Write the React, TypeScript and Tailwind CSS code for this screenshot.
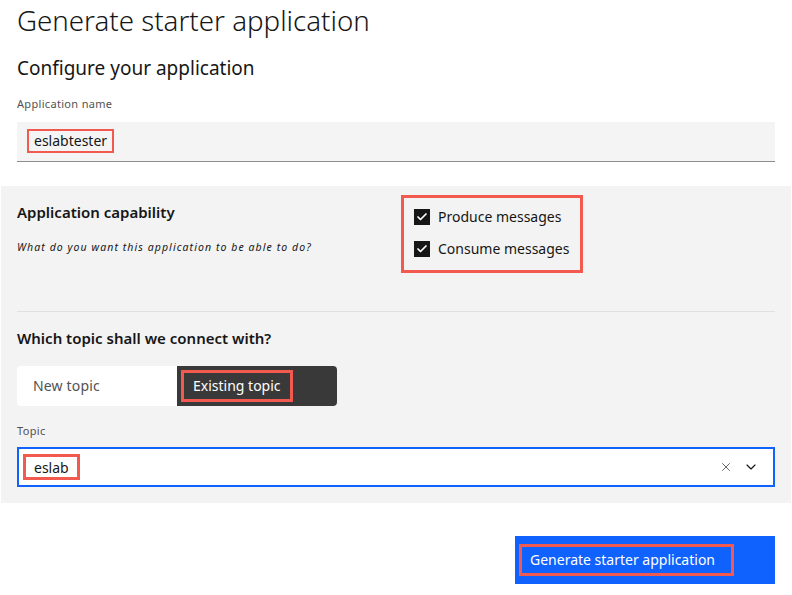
import { Check, X, ChevronDown } from "lucide-react";

const font = { fontFamily: '"Noto Sans", "Open Sans", Arial, sans-serif' };

function Checkbox({ label }: { label: string }) {
  return (
    <label className="flex h-[20px] items-center gap-2 text-[14px] text-[#161616]">
      <span className="flex h-4 w-4 items-center justify-center bg-[#161616]">
        <Check className="h-3 w-3 text-white" strokeWidth={3.5} />
      </span>
      {label}
    </label>
  );
}

export default function App() {
  return (
    <div className="h-[595px] w-[792px] overflow-hidden bg-white text-[#161616]" style={font}>
      <div className="px-[17px]">
        <h1 className="pt-[2px] text-[27.7px] font-light leading-[36px]">Generate starter application</h1>
        <h2 className="mt-[17px] text-[19px] font-normal leading-[26px]">Configure your application</h2>
        <div className="mt-[15px] text-[11px] tracking-[0.32px] text-[#525252]">Application name</div>
        <div className="mt-[9px] flex h-[40px] items-center border-b border-[#8d8d8d] bg-[#f4f4f4] px-[10px]">
          <span className="border-2 border-[#f25a4f] px-[5px] text-[14px] leading-[20px]">eslabtester</span>
        </div>
      </div>

      <div className="mx-px mt-[24px] h-[317px] bg-[#f3f3f3] px-[16px]">
        <div className="flex h-[126px] border-b border-[#e0e0e0]">
          <div className="w-[384px] pt-[16px]">
            <div className="text-[15px] font-semibold leading-[20px]">Application capability</div>
            <div className="mt-[18px] text-[10.5px] italic tracking-[1.08px] text-[#161616]">
              What do you want this application to be able to do?
            </div>
          </div>
          <div className="mt-[9px] flex h-[78px] w-[182px] flex-col gap-[12px] border-[3px] border-[#f25a4f] pl-[10px] pt-[9px]">
            <Checkbox label="Produce messages" />
            <Checkbox label="Consume messages" />
          </div>
        </div>

        <div className="pt-[16px] text-[15px] font-semibold leading-[20px]">Which topic shall we connect with?</div>
        <div className="mt-[18px] flex h-[40px] w-[320px] text-[14px]">
          <div className="flex w-[160px] items-center rounded-l-[4px] bg-white pl-[16px] tracking-[0.16px] text-[#525252]">
            New topic
          </div>
          <div className="flex w-[160px] items-center rounded-r-[4px] bg-[#393939] pl-[4px] text-white">
            <span className="flex h-[32px] items-center border-[3px] border-[#f25a4f] px-[9px]">Existing topic</span>
          </div>
        </div>
        <div className="mt-[17px] text-[11px] tracking-[0.32px] text-[#525252]">Topic</div>
        <div className="mt-[8px] flex h-[40px] items-center border-2 border-[#0f62fe] bg-white pl-[4px] pr-[14px]">
          <span className="flex h-[26px] items-center border-[3px] border-[#f25a4f] px-[8px] text-[14px]">eslab</span>
          <div className="ml-auto flex items-center gap-[10px] text-[#525252]">
            <X className="h-[14px] w-[14px]" strokeWidth={1.5} />
            <ChevronDown className="h-[16px] w-[16px] text-[#161616]" strokeWidth={1.75} />
          </div>
        </div>
      </div>

      <div className="flex justify-end px-[17px] pt-[33px]">
        <button className="flex h-[48px] w-[260px] items-center bg-[#0f62fe] pl-[4px] text-left">
          <span className="flex h-[32px] items-center border-[3px] border-[#f25a4f] pl-[8px] pr-[16px] text-[14px] text-white">
            Generate starter application
          </span>
        </button>
      </div>
    </div>
  );
}
